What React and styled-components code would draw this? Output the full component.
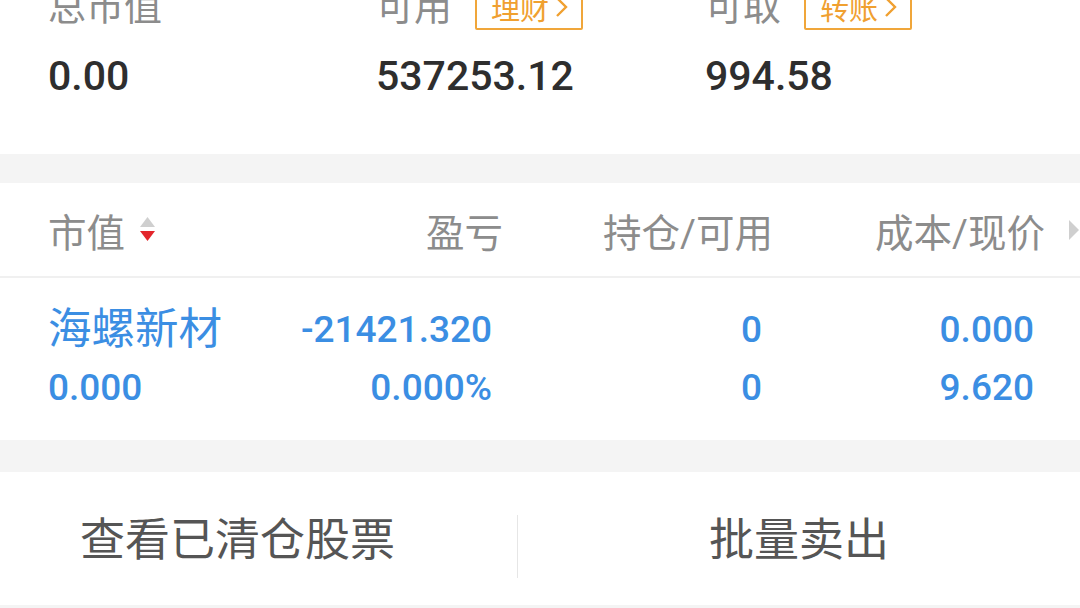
import styled, { createGlobalStyle } from "styled-components";

const GlobalStyle = createGlobalStyle`
  html, body {
    margin: 0;
    padding: 0;
    background-color: #f4f4f4;
    overflow: hidden;
  }
  body {
    font-family: Roboto, "Noto Sans CJK SC", sans-serif;
  }
`;

const Page = styled.div`
  width: 1080px;
  height: 608px;
  overflow: hidden;
  background-color: #f4f4f4;
`;

const Summary = styled.section`
  background-color: #fff;
  height: 154px;
  overflow: hidden;
`;

const SummaryGrid = styled.div`
  display: grid;
  grid-template-columns: 328px 329px 1fr;
  padding-left: 48px;
  margin-top: -16px;
`;

const SummaryCell = styled.div`
  display: flex;
  flex-direction: column;
`;

const LabelRow = styled.div`
  display: flex;
  align-items: center;
  gap: 23px;
  height: 46px;
`;

const Label = styled.span`
  font-size: 38px;
  color: #8c8c8c;
  line-height: 46px;
`;

const Tag = styled.span`
  display: flex;
  align-items: center;
  gap: 6px;
  height: 46px;
  padding: 0 10px 0 14px;
  border: 2px solid #f0a63a;
  border-radius: 2px;
  color: #f0a030;
  font-size: 29px;
  box-sizing: border-box;
  width: 108px;
`;

const Value = styled.span`
  font-size: 41px;
  font-weight: 500;
  color: #2e2e2e;
  margin-top: 20px;
  line-height: 52px;
`;

const Card = styled.section`
  background-color: #fff;
  margin-top: 29px;
`;

const TableRow = styled.div`
  display: grid;
  grid-template-columns: 200px 255px 270px 272px 35px;
  padding-left: 48px;
  align-items: center;
  height: ${(p) => p.$height}px;
  border-bottom: ${(p) => (p.$border ? "2px solid #f0f0f0" : "none")};
  box-sizing: border-box;
`;

const HeadCell = styled.div`
  display: flex;
  align-items: center;
  justify-content: ${(p) => (p.$left ? "flex-start" : "flex-end")};
  font-size: 38.5px;
  color: #8c8c8c;
  gap: 14px;
`;

const DataCol = styled.div`
  display: flex;
  flex-direction: column;
  align-items: ${(p) => (p.$left ? "flex-start" : "flex-end")};
  padding-right: ${(p) => (p.$left ? 0 : 11)}px;
  color: #3b8ee3;
  gap: 6px;
`;

const Name = styled.span`
  font-size: 43.5px;
  line-height: 52px;
`;

const Num = styled.span`
  font-size: 37px;
  line-height: 52px;
  font-weight: 500;
`;

const Actions = styled.section`
  background-color: #fff;
  margin-top: 32px;
  height: 133px;
  display: grid;
  grid-template-columns: 517px 1px 1fr;
  align-items: center;
`;

const Action = styled.div`
  font-size: 45px;
  color: #555;
  padding-left: ${(p) => (p.$left ? 80 : 0)}px;
  text-align: ${(p) => (p.$left ? "left" : "center")};
  margin-top: -4px;
`;

const Divider = styled.div`
  height: 63px;
  margin-top: 16px;
  background-color: #e6e6e6;
`;

function SortIcon() {
  return (
    <svg width="17" height="25" viewBox="0 0 17 25">
      <path d="M8.5 0 L16 10 L1 10 Z" fill="#cfcfcf" />
      <path d="M1 14 L16 14 L8.5 24 Z" fill="#e3262c" />
    </svg>
  );
}

function MoreIcon() {
  return (
    <svg width="12" height="22" viewBox="0 0 12 22">
      <path d="M1 1 L11 11 L1 21 Z" fill="#cfcfcf" />
    </svg>
  );
}

function Chevron() {
  return (
    <svg width="13" height="22" viewBox="0 0 13 22">
      <path d="M2 2 L11 11 L2 20" fill="none" stroke="#f0a030" strokeWidth="2.4" />
    </svg>
  );
}

const summary = [
  { label: "总市值", value: "0.00" },
  { label: "可用", tag: "理财", value: "537253.12" },
  { label: "可取", tag: "转账", value: "994.58" },
];

export default function App() {
  return (
    <Page>
      <GlobalStyle />
      <Summary>
        <SummaryGrid>
          {summary.map((s) => (
            <SummaryCell key={s.label}>
              <LabelRow>
                <Label>{s.label}</Label>
                {s.tag && (
                  <Tag>
                    {s.tag}
                    <Chevron />
                  </Tag>
                )}
              </LabelRow>
              <Value>{s.value}</Value>
            </SummaryCell>
          ))}
        </SummaryGrid>
      </Summary>

      <Card>
        <TableRow $height={95} $border>
          <HeadCell $left>
            市值
            <SortIcon />
          </HeadCell>
          <HeadCell>盈亏</HeadCell>
          <HeadCell>持仓/可用</HeadCell>
          <HeadCell>成本/现价</HeadCell>
          <HeadCell>
            <MoreIcon />
          </HeadCell>
        </TableRow>
        <TableRow $height={162}>
          <DataCol $left>
            <Name>海螺新材</Name>
            <Num>0.000</Num>
          </DataCol>
          <DataCol>
            <Num>-21421.320</Num>
            <Num>0.000%</Num>
          </DataCol>
          <DataCol>
            <Num>0</Num>
            <Num>0</Num>
          </DataCol>
          <DataCol>
            <Num>0.000</Num>
            <Num>9.620</Num>
          </DataCol>
        </TableRow>
      </Card>

      <Actions>
        <Action $left>查看已清仓股票</Action>
        <Divider />
        <Action>批量卖出</Action>
      </Actions>
    </Page>
  );
}
